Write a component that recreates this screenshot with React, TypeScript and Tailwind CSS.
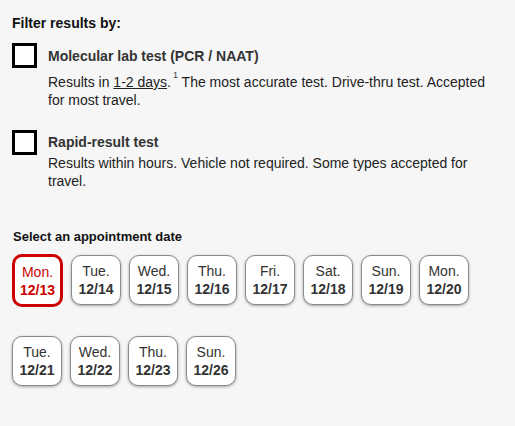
const dates1 = [
  ['Mon.', '12/13'],
  ['Tue.', '12/14'],
  ['Wed.', '12/15'],
  ['Thu.', '12/16'],
  ['Fri.', '12/17'],
  ['Sat.', '12/18'],
  ['Sun.', '12/19'],
  ['Mon.', '12/20'],
]
const dates2 = [
  ['Tue.', '12/21'],
  ['Wed.', '12/22'],
  ['Thu.', '12/23'],
  ['Sun.', '12/26'],
]

const DateBtn = ({ day, date, active }: { day: string; date: string; active?: boolean }) => (
  <button
    className={
      active
        ? 'w-[51px] h-[53px] rounded-[10px] border-[3px] border-[#cc0000] bg-white flex flex-col items-center justify-center text-[#cc0000] leading-[18px]'
        : 'w-[50px] h-[50px] mt-[1px] rounded-[10px] border border-[#8a8a8a] bg-white shadow-[0_1px_3px_rgba(0,0,0,0.35)] flex flex-col items-center justify-center text-[#333] leading-[18px]'
    }
  >
    <span className='text-[14px]'>{day}</span>
    <span className='text-[14px] font-bold'>{date}</span>
  </button>
)

const App = () => {
  return (
    <div className='min-h-[426px] w-[515px] bg-[#f6f6f6] px-3 pt-[14px] text-[14px] font-["Liberation_Sans",Arial,sans-serif]'>
      <h3 className='font-bold text-[14px] text-[#111] leading-[18px]'>Filter results by:</h3>

      <div className='mt-[11px] flex gap-[11px]'>
        <div className='w-[25px] h-[25px] border-[3px] border-black bg-white shrink-0'></div>
        <div className='pt-[4px]'>
          <div className='font-bold text-[#333] leading-[18px]'>Molecular lab test (PCR / NAAT)</div>
          <p className='mt-[8px] text-[#222] leading-[18px]'>
            Results in <span className='underline'>1-2 days</span>.<span className='inline-block align-top text-[9px] leading-[9px] ml-[2px] -mt-[2px] text-[#444]'>1</span> The most accurate test. Drive-thru test. Accepted for most travel.
          </p>
        </div>
      </div>

      <div className='mt-[21px] flex gap-[11px]'>
        <div className='w-[25px] h-[25px] border-[3px] border-black bg-white shrink-0'></div>
        <div className='pt-[3px]'>
          <div className='font-bold text-[#333] leading-[18px]'>Rapid-result test</div>
          <p className='mt-[3px] text-[#222] leading-[18px]'>
            Results within hours. Vehicle not required. Some types accepted for travel.
          </p>
        </div>
      </div>

      <h3 className='mt-[38px] font-bold text-[13px] text-[#111] leading-[18px] pl-[1px]'>Select an appointment date</h3>

      <div className='mt-[8px] flex gap-[8px] items-start'>
        {dates1.map((d, i) => (
          <DateBtn key={i} day={d[0]} date={d[1]} active={i === 0} />
        ))}
      </div>
      <div className='mt-[28px] flex gap-[8px]'>
        {dates2.map((d, i) => (
          <DateBtn key={i} day={d[0]} date={d[1]} />
        ))}
      </div>
    </div>
  )
}

export default App
